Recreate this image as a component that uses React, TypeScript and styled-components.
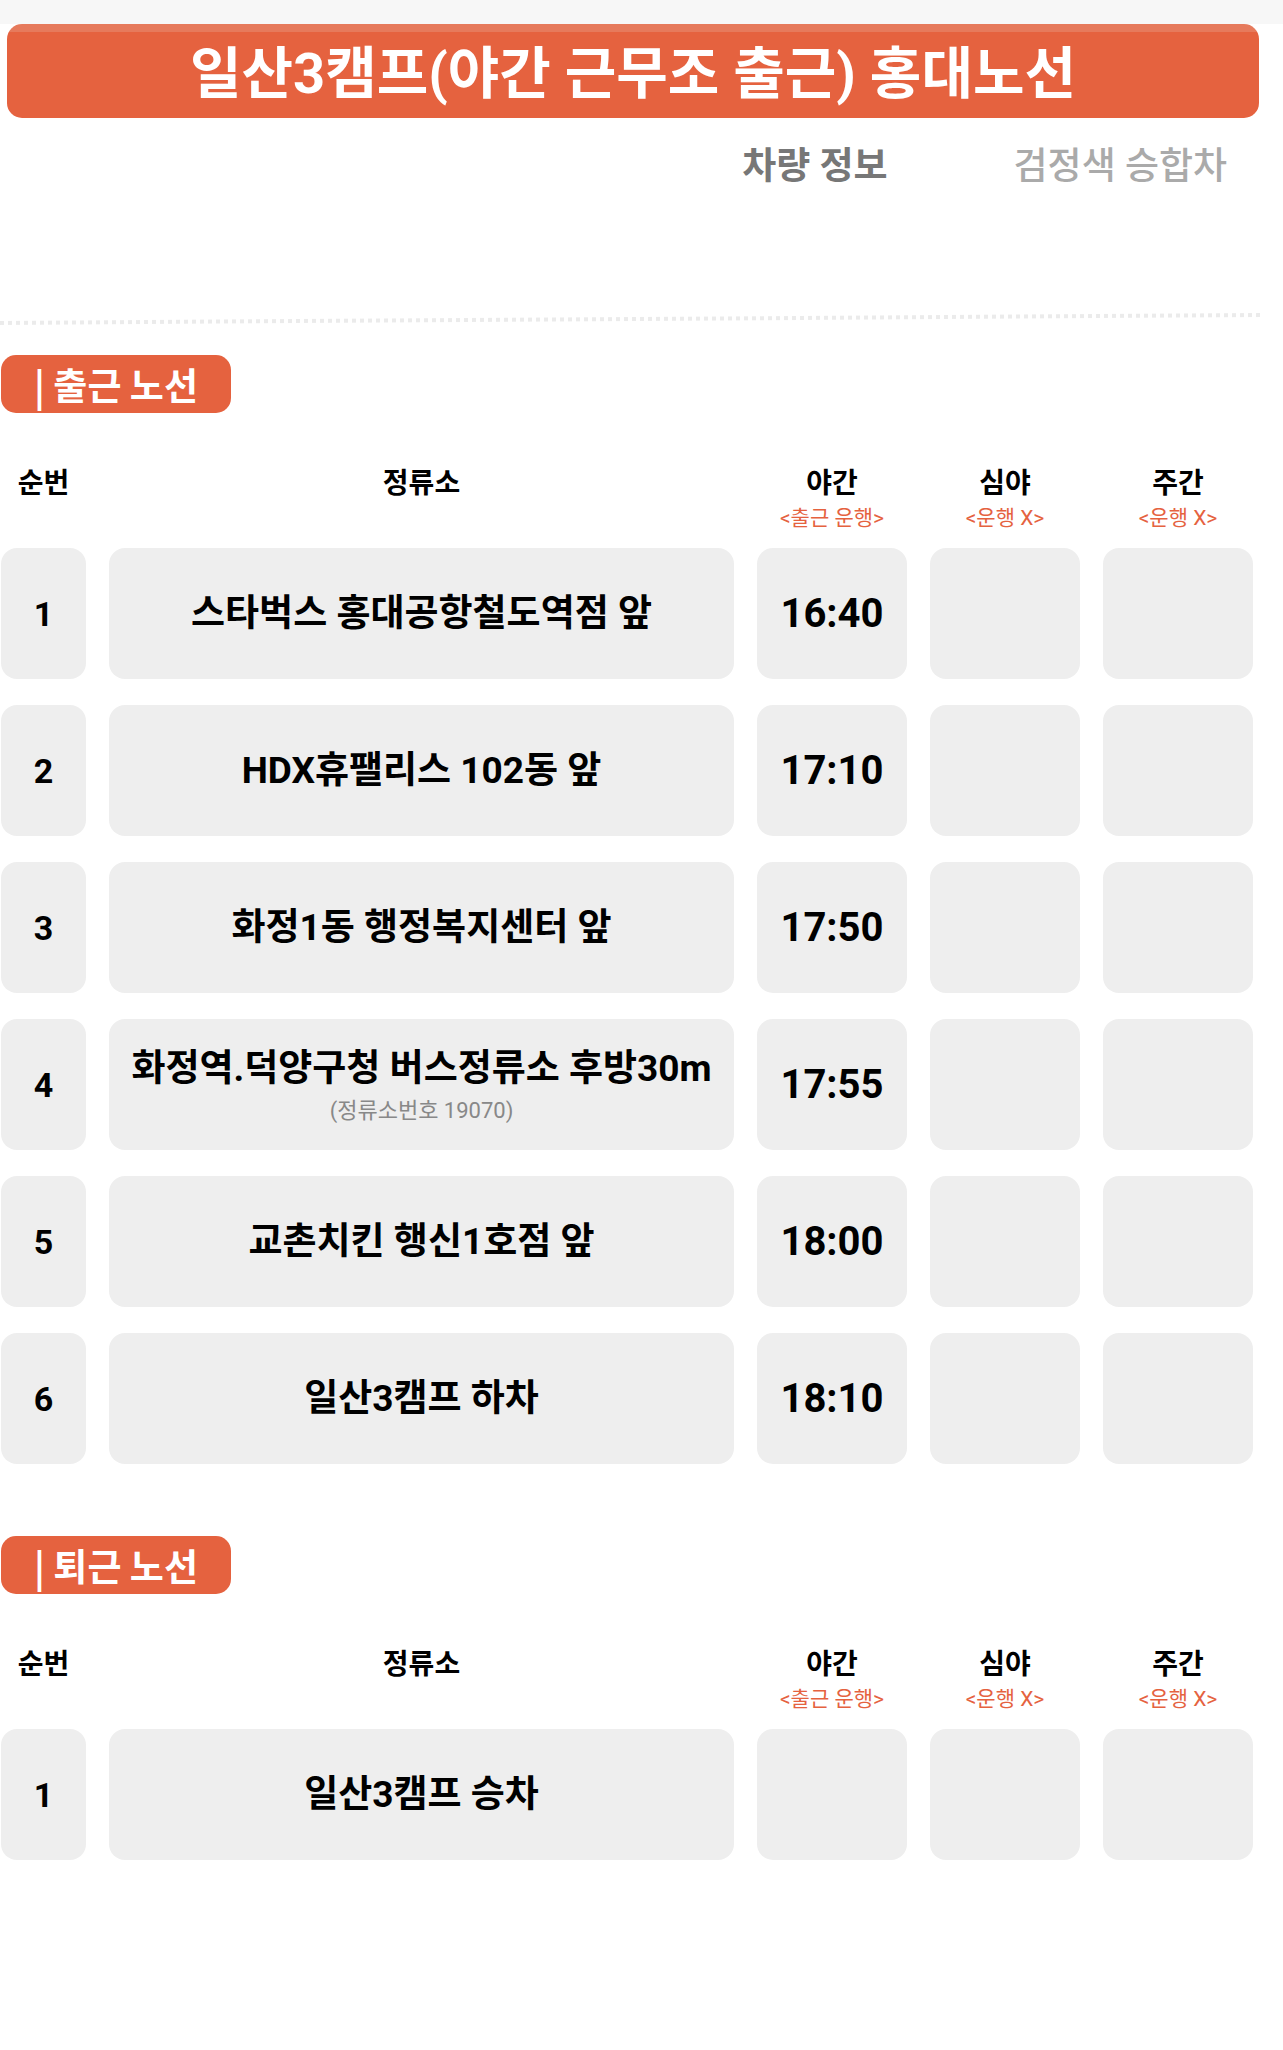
import { Fragment } from "react";
import styled, { createGlobalStyle } from "styled-components";

const GlobalStyle = createGlobalStyle`
  body {
    margin: 0;
    background: #fff;
    font-family: Roboto, "Noto Sans CJK KR", "Noto Sans", sans-serif;
    color: #000;
  }
`;

const ORANGE = "#e5623f";

const Page = styled.div`
  width: 1283px;
  padding-bottom: 190px;
`;

const TopBar = styled.div`
  height: 24px;
  background: #f7f7f7;
`;

const Banner = styled.h1`
  margin: 0 24px 0 7px;
  height: 94px;
  padding-bottom: 6px;
  box-sizing: border-box;
  border-radius: 15px;
  background: linear-gradient(#e67a5c 0 8px, ${ORANGE} 8px);
  color: #fff;
  font-size: 56px;
  font-weight: 700;
  display: flex;
  align-items: center;
  justify-content: center;
`;

const Tabs = styled.nav`
  display: flex;
  justify-content: flex-end;
  gap: 126px;
  padding-right: 56px;
  margin-top: 25px;
`;

const Tab = styled.span<{ $active?: boolean }>`
  font-size: 37px;
  line-height: 48px;
  font-weight: ${(p) => (p.$active ? 700 : 500)};
  color: ${(p) => (p.$active ? "#777" : "#aaa")};
`;

const Divider = styled.div`
  width: 1262px;
  height: 4px;
  margin-top: 126px;
  background: repeating-linear-gradient(90deg, #ebebeb 0 4px, transparent 4px 8px);
  transform: rotate(-0.36deg);
`;

const Section = styled.section<{ $gap: number }>`
  margin-top: ${(p) => p.$gap}px;
`;

const Pill = styled.h2`
  display: inline-flex;
  align-items: center;
  margin: 0 0 0 1px;
  height: 58px;
  padding: 0 33px;
  border-radius: 15px;
  background: ${ORANGE};
  color: #fff;
  font-family: "Noto Sans CJK KR", sans-serif;
  font-size: 37px;
  font-weight: 700;
`;

const Grid = styled.div`
  display: grid;
  grid-template-columns: 85px 625px 150px 150px 150px;
  column-gap: 23px;
  padding-left: 1px;
`;

const HeadRow = styled(Grid)`
  margin-top: 55px;
  margin-bottom: 17px;
`;

const HeadCell = styled.div`
  display: flex;
  flex-direction: column;
  align-items: center;
`;

const HeadTitle = styled.span`
  font-size: 28px;
  line-height: 32px;
  font-weight: 700;
`;

const HeadSub = styled.span`
  margin-top: 5px;
  font-size: 21px;
  line-height: 26px;
  color: ${ORANGE};
`;

const Rows = styled(Grid)`
  row-gap: 26px;
`;

const Cell = styled.div`
  height: 131px;
  border-radius: 16px;
  background: #eee;
  display: flex;
  flex-direction: column;
  align-items: center;
  justify-content: center;
  text-align: center;
`;

const Num = styled.span`
  font-size: 34px;
  font-weight: 700;
`;

const StopName = styled.span`
  font-size: 37px;
  line-height: 46px;
  font-weight: 700;
`;

const StopNote = styled.span`
  margin-top: 6px;
  font-size: 22px;
  line-height: 26px;
  color: #888;
`;

const Time = styled.span`
  font-size: 40px;
  font-weight: 700;
`;

type Stop = { name: string; note?: string; night?: string };

const goStops: Stop[] = [
  { name: "스타벅스 홍대공항철도역점 앞", night: "16:40" },
  { name: "HDX휴팰리스 102동 앞", night: "17:10" },
  { name: "화정1동 행정복지센터 앞", night: "17:50" },
  { name: "화정역.덕양구청 버스정류소 후방30m", note: "(정류소번호 19070)", night: "17:55" },
  { name: "교촌치킨 행신1호점 앞", night: "18:00" },
  { name: "일산3캠프 하차", night: "18:10" },
];

const backStops: Stop[] = [{ name: "일산3캠프 승차" }];

function Route({ title, stops, gap }: { title: string; stops: Stop[]; gap: number }) {
  return (
    <Section $gap={gap}>
      <Pill>| {title}</Pill>
      <HeadRow>
        <HeadCell>
          <HeadTitle>순번</HeadTitle>
        </HeadCell>
        <HeadCell>
          <HeadTitle>정류소</HeadTitle>
        </HeadCell>
        <HeadCell>
          <HeadTitle>야간</HeadTitle>
          <HeadSub>&lt;출근 운행&gt;</HeadSub>
        </HeadCell>
        <HeadCell>
          <HeadTitle>심야</HeadTitle>
          <HeadSub>&lt;운행 X&gt;</HeadSub>
        </HeadCell>
        <HeadCell>
          <HeadTitle>주간</HeadTitle>
          <HeadSub>&lt;운행 X&gt;</HeadSub>
        </HeadCell>
      </HeadRow>
      <Rows>
        {stops.map((s, i) => (
          <Fragment key={i}>
            <Cell>
              <Num>{i + 1}</Num>
            </Cell>
            <Cell>
              <StopName>{s.name}</StopName>
              {s.note && <StopNote>{s.note}</StopNote>}
            </Cell>
            <Cell>{s.night && <Time>{s.night}</Time>}</Cell>
            <Cell />
            <Cell />
          </Fragment>
        ))}
      </Rows>
    </Section>
  );
}

export default function App() {
  return (
    <Page>
      <GlobalStyle />
      <TopBar />
      <Banner>일산3캠프(야간 근무조 출근) 홍대노선</Banner>
      <Tabs>
        <Tab $active>차량 정보</Tab>
        <Tab>검정색 승합차</Tab>
      </Tabs>
      <Divider />
      <Route title="출근 노선" stops={goStops} gap={34} />
      <Route title="퇴근 노선" stops={backStops} gap={72} />
    </Page>
  );
}
